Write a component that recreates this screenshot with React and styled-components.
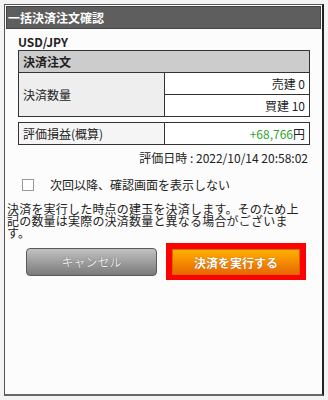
import React from "react";
import styled, { createGlobalStyle } from "styled-components";

const GlobalStyle = createGlobalStyle`
  body {
    margin: 0;
    background: #f3f3f3;
    font-family: "Noto Sans CJK JP", "Noto Sans", sans-serif;
    color: #222;
  }
`;

const St = {
  Page: styled.div`
    padding: 4px;
  `,
  Frame: styled.div`
    box-sizing: border-box;
    width: 320px;
    height: 392px;
    padding: 1px;
    background: #fcfcfc;
    border-top: 1px solid #555;
    border-left: 1px solid #555;
    border-right: 2px solid #222;
    border-bottom: 2px solid #666;
  `,
  Header: styled.div`
    box-sizing: border-box;
    height: 23px;
    line-height: 21px;
    padding-left: 1px;
    background: #5e5e5e;
    border: 1px solid #444;
    color: #fff;
    font-size: 12px;
    font-weight: 700;
  `,
  Symbol: styled.div`
    margin: 5px 0 0 12px;
    line-height: 16px;
    font-size: 12px;
    font-weight: 700;
  `,
  Table: styled.table`
    box-sizing: border-box;
    width: 292px;
    margin: ${({ mt }) => mt || "0"} 0 0 12px;
    border-collapse: collapse;
    font-size: 12px;
  `,
  Th: styled.th`
    height: 21px;
    padding: 0 4px;
    text-align: left;
    font-weight: 700;
    background: #cccccc;
    border: 1px solid #333;
  `,
  Label: styled.td`
    width: 137px;
    height: 21px;
    padding: 0 4px;
    background: ${({ bg }) => bg || "#eeeeee"};
    border: 1px solid #333;
  `,
  Value: styled.td`
    height: 21px;
    padding: 0 4px;
    text-align: right;
    background: #fff;
    border: 1px solid #333;
  `,
  Profit: styled.span`
    color: #2fa52f;
  `,
  Date: styled.div`
    margin-top: 5px;
    padding-right: 13px;
    line-height: 16px;
    text-align: right;
    font-size: 12px;
  `,
  CheckRow: styled.label`
    display: flex;
    align-items: center;
    gap: 16px;
    margin: 11px 0 0 16px;
    line-height: 16px;
    font-size: 12px;
  `,
  Box: styled.span`
    box-sizing: border-box;
    width: 12px;
    height: 12px;
    background: #fff;
    border: 1px solid #999;
  `,
  Note: styled.p`
    margin: 10px 0 0;
    padding: 0 16px 0 1px;
    font-size: 12px;
    letter-spacing: 0.2px;
    line-height: 12px;
  `,
  Buttons: styled.div`
    display: flex;
    align-items: center;
    gap: 9px;
    margin-top: 4px;
    padding-left: 20px;
  `,
  Cancel: styled.button`
    box-sizing: border-box;
    width: 131px;
    height: 28px;
    padding: 0;
    border: 1px solid #5a5a5a;
    border-radius: 4px;
    background: linear-gradient(#c2c2c2, #7a7a7a);
    color: #eeeeee;
    font-family: inherit;
    font-size: 12px;
    text-shadow: 0 0 1px #444;
  `,
  Highlight: styled.div`
    border: 6px solid #ff0000;
    border-bottom-width: 5px;
  `,
  Execute: styled.button`
    display: block;
    box-sizing: border-box;
    width: 128px;
    height: 26px;
    padding: 0;
    border: 1px solid #d26a00;
    background: linear-gradient(#ffb000, #e86800);
    color: #fff;
    font-family: inherit;
    font-size: 12px;
    font-weight: 700;
    text-shadow: 0 0 1px #a04000;
  `,
};

const App = () => {
  return (
    <>
      <GlobalStyle />
      <St.Page>
        <St.Frame>
          <St.Header>一括決済注文確認</St.Header>
          <St.Symbol>USD/JPY</St.Symbol>
          <St.Table>
            <tbody>
              <tr>
                <St.Th colSpan={2}>決済注文</St.Th>
              </tr>
              <tr>
                <St.Label rowSpan={2}>決済数量</St.Label>
                <St.Value>売建 0</St.Value>
              </tr>
              <tr>
                <St.Value>買建 10</St.Value>
              </tr>
            </tbody>
          </St.Table>
          <St.Table mt="5px">
            <tbody>
              <tr>
                <St.Label bg="#f5f5f5">評価損益(概算)</St.Label>
                <St.Value>
                  <St.Profit>+68,766</St.Profit>円
                </St.Value>
              </tr>
            </tbody>
          </St.Table>
          <St.Date>評価日時 : 2022/10/14 20:58:02</St.Date>
          <St.CheckRow>
            <St.Box />
            次回以降、確認画面を表示しない
          </St.CheckRow>
          <St.Note>
            決済を実行した時点の建玉を決済します。そのため上記の数量は実際の決済数量と異なる場合がございます。
          </St.Note>
          <St.Buttons>
            <St.Cancel>キャンセル</St.Cancel>
            <St.Highlight>
              <St.Execute>決済を実行する</St.Execute>
            </St.Highlight>
          </St.Buttons>
        </St.Frame>
      </St.Page>
    </>
  );
};

export default App;
